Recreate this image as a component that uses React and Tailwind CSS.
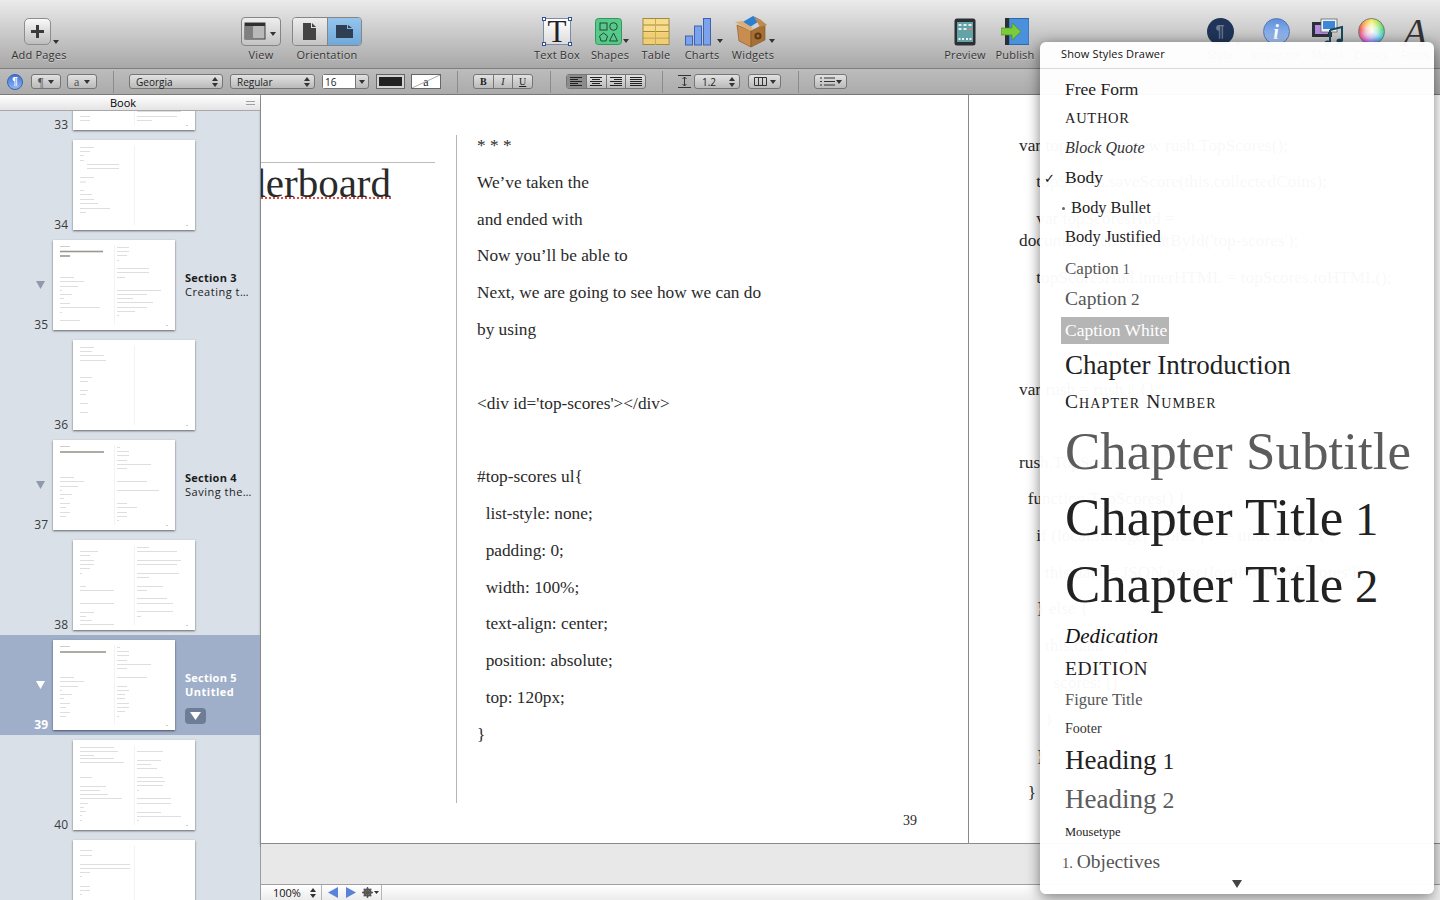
import React from 'react';

const Caret = ({ x, y }) => <path d={`M${x} ${y}h6l-3 4z`} fill="#333" />;

const AddPagesIcon = () => (
  <div className="relative h-[28px] w-[44px]">
    <div className="ml-[7px] flex h-[27px] w-[27px] items-center justify-center rounded-[5px] border border-[#8d8d8d] bg-gradient-to-b from-[#fafafa] to-[#bdbdbd]">
      <svg width="15" height="15" viewBox="0 0 15 15"><path d="M6 1h3v5h5v3H9v5H6V9H1V6h5z" fill="#3a3a3a" /></svg>
    </div>
    <svg className="absolute left-[35px] top-[21px]" width="8" height="6"><Caret x={1} y={1} /></svg>
  </div>
);

const ViewIcon = () => (
  <div className="-mt-px flex h-[29px] w-[40px] items-center justify-center rounded-[4px] border border-[#858585] bg-gradient-to-b from-[#eeeeee] to-[#c4c4c4]">
    <svg width="34" height="20" viewBox="0 0 34 20">
      <rect x="1" y="1" width="20" height="16" fill="#b9b9b9" stroke="#3c3c3c" />
      <rect x="1" y="1" width="20" height="3" fill="#2f2f2f" />
      <rect x="1" y="4" width="8" height="13" fill="#7f7f7f" />
      <Caret x={26} y={10} />
    </svg>
  </div>
);

const OrientationIcon = () => (
  <div className="-mt-px flex h-[29px] w-[70px] overflow-hidden rounded-[4px] border border-[#858585]">
    <div className="flex flex-1 items-center justify-center border-r border-[#858585] bg-gradient-to-b from-[#eeeeee] to-[#c4c4c4]">
      <svg width="13" height="17" viewBox="0 0 13 17"><path d="M0 0h8v5h5v12H0z" fill="#444" /><path d="M9 0l4 4H9z" fill="#444" /></svg>
    </div>
    <div className="flex flex-1 items-center justify-center bg-gradient-to-b from-[#95c5ec] to-[#6fa8da]">
      <svg width="17" height="13" viewBox="0 0 17 13"><path d="M0 0h11v4h6v9H0z" fill="#2f3e52" /><path d="M12 0l4 3h-4z" fill="#2f3e52" /></svg>
    </div>
  </div>
);

const TextBoxIcon = () => (
  <div className="relative h-[27px] w-[28px] border border-[#7d8aa8] bg-gradient-to-b from-white to-[#dcdcdc]">
    <div className="flex h-full items-center justify-center font-['Liberation_Serif',serif] text-[31px] leading-none text-[#222]">T</div>
    <span className="absolute -left-[2px] -top-[2px] h-[4px] w-[4px] border border-[#30508f] bg-white" />
    <span className="absolute -right-[2px] -top-[2px] h-[4px] w-[4px] border border-[#30508f] bg-white" />
    <span className="absolute -bottom-[2px] -left-[2px] h-[4px] w-[4px] border border-[#30508f] bg-white" />
    <span className="absolute -bottom-[2px] -right-[2px] h-[4px] w-[4px] border border-[#30508f] bg-white" />
  </div>
);

const ShapesIcon = () => (
  <svg width="36" height="28" viewBox="0 0 36 28">
    <rect x="1.5" y=".5" width="26" height="26" rx="3" fill="#58c98a" stroke="#2b9a5c" />
    <g fill="none" stroke="#1c4d33" strokeWidth="1">
      <rect x="6" y="5" width="7" height="7" />
      <circle cx="19.5" cy="8.5" r="3.8" />
      <path d="M9.500 15l4 3-1.500 5H7l-1.500-5z" />
      <path d="M19.500 15l4 8h-8z" />
    </g>
    <Caret x={29} y={21} />
  </svg>
);

const TableIcon = () => (
  <svg width="28" height="28" viewBox="0 0 28 28">
    <rect x="1" y=".5" width="26" height="26" fill="#f6dd8e" stroke="#a48a3a" />
    <path d="M1 7h26M1 13.500h26M1 20h26" stroke="#a48a3a" />
    <path d="M13.500 1v26" stroke="#c9ad55" />
    <rect x="2" y="14.500" width="11" height="5" fill="#f1ce73" /><rect x="14" y="14.500" width="12" height="5" fill="#f1ce73" />
    <rect x="2" y="21" width="11" height="5" fill="#f1ce73" /><rect x="14" y="21" width="12" height="5" fill="#f1ce73" />
  </svg>
);

const ChartsIcon = () => (
  <svg width="40" height="28" viewBox="0 0 40 28">
    <rect x="1.500" y="18" width="7" height="9" fill="#7ba2ea" stroke="#3a62b5" />
    <rect x="10.500" y="8" width="7" height="19" fill="#7ba2ea" stroke="#3a62b5" />
    <rect x="19.500" y=".5" width="7" height="26.500" fill="#7ba2ea" stroke="#3a62b5" />
    <Caret x={33} y={21} />
  </svg>
);

const WidgetsIcon = () => (
  <svg width="46" height="32" viewBox="0 0 46 32">
    <path d="M3 9l14 6v16L5 25z" fill="#c98d4f" stroke="#7d5426" strokeWidth=".6" />
    <path d="M17 15l14-7v16l-14 7z" fill="#a86f35" stroke="#7d5426" strokeWidth=".6" />
    <path d="M7 7l12-7 8 4-11 7z" fill="#2b7fd0" />
    <path d="M1 6l7-1 11 7-3 3z" fill="#dcae74" />
    <path d="M20 1l7 3 6 5-7 2z" fill="#c08a4e" />
    <circle cx="24" cy="20" r="3.600" fill="#5c3a17" />
    <circle cx="24" cy="20" r="1.400" fill="#a86f35" />
    <Caret x={35} y={23} />
  </svg>
);

const PreviewIcon = () => (
  <svg width="22" height="28" viewBox="0 0 22 28">
    <rect x=".5" y=".5" width="21" height="27" rx="2.500" fill="#2c2f33" />
    <rect x="3" y="4" width="16" height="20" fill="#63a3a8" />
    <path d="M4.500 6h3v2h-3zM9.500 6h3v2h-3zM14.500 6h3v2h-3zM4.500 10h3v2h-3zM9.500 10h3v2h-3z" fill="#e8eef0" />
    <path d="M4.500 20h2v2h-2zM8 20h2v2H8zM12 20h2v2h-2zM15.500 20h2v2h-2z" fill="#f2f2f2" />
    <path d="M14.500 10h3v2h-3z" fill="#e0825a" />
  </svg>
);

const PublishIcon = () => (
  <svg width="28" height="28" viewBox="0 0 28 28">
    <rect x="8" y=".5" width="20" height="26" fill="#4a90dc" stroke="#2d68ab" />
    <rect x="4" y="0" width="4" height="27" fill="#2a2d33" />
    <path d="M0 10h11V5l9 8.500-9 8.500v-5H0z" fill="#7bcb3a" stroke="#4e8f1f" strokeWidth=".7" />
  </svg>
);

const StyleIcon = () => (
  <div className="relative h-[28px] w-[36px]">
    <div className="flex h-[27px] w-[27px] items-center justify-center rounded-full bg-[#1f3458] font-['Liberation_Sans',sans-serif] text-[16px] font-bold text-[#6f7a8c]">¶</div>
    <svg className="absolute left-[27px] top-[23px]" width="8" height="6"><Caret x={1} y={1} /></svg>
  </div>
);

const InspectorIcon = () => (
  <div className="flex h-[27px] w-[27px] items-center justify-center rounded-full border border-[#5277b5] bg-gradient-to-b from-[#5e8fdc] to-[#aac8f2] font-['Liberation_Serif',serif] text-[20px] font-bold italic leading-none text-white">i</div>
);

const MediaIcon = () => (
  <svg width="34" height="28" viewBox="0 0 34 28">
    <rect x="1" y="4" width="20" height="15" fill="#2c3138" />
    <rect x="4" y="7" width="13" height="9" fill="#b48be0" />
    <rect x="10" y="1" width="16" height="13" fill="#eef1f5" stroke="#555" strokeWidth=".7" />
    <rect x="12" y="3" width="12" height="8" fill="#3c87d8" />
    <path d="M19 12l12-3v14" fill="none" stroke="#17485a" strokeWidth="2" />
    <path d="M19 12v13" stroke="#17485a" strokeWidth="2" />
    <ellipse cx="16.500" cy="25" rx="3" ry="2.500" fill="#17485a" />
    <ellipse cx="28.500" cy="23" rx="3" ry="2.500" fill="#17485a" />
  </svg>
);

const ColorsIcon = () => (
  <div className="relative h-[27px] w-[27px] rounded-full border border-[#777] bg-[conic-gradient(#f7e83c,#8ee03c,#2ecf6a,#2cc8e0,#3c6ae8,#a03ce0,#e83c9a,#e83c3c,#f79a2c,#f7e83c)]">
    <div className="h-full w-full rounded-full bg-[radial-gradient(circle,#ffffff_0%,rgba(255,255,255,0.7)_35%,rgba(255,255,255,0)_75%)]" />
  </div>
);

const FontsIcon = () => (
  <div className="font-['Liberation_Serif',serif] text-[40px] italic leading-[30px] text-[#333]">A</div>
);

const ToolItem = ({ w, ml, label, children }) => (
  <div className={`flex flex-col items-center ${w} ${ml || ''}`}>
    <div className="flex h-[28px] items-start justify-center">{children}</div>
    <div className="mt-[2px] whitespace-nowrap text-[11px] leading-[14px] tracking-[0.2px] text-[#333] [text-shadow:0_1px_0_rgba(255,255,255,0.4)]">{label}</div>
  </div>
);

const Toolbar = () => (
  <div className="flex h-[69px] shrink-0 border-b border-[#7e7e7e] bg-gradient-to-b from-[#ebebeb] to-[#a8a8a8] pt-[18px]">
    <ToolItem w="w-[78px]" label="Add Pages"><AddPagesIcon /></ToolItem>
    <ToolItem w="w-[60px]" ml="ml-[153px]" label="View"><ViewIcon /></ToolItem>
    <ToolItem w="w-[72px]" label="Orientation"><OrientationIcon /></ToolItem>
    <ToolItem w="w-[52px]" ml="ml-[168px]" label="Text Box"><TextBoxIcon /></ToolItem>
    <ToolItem w="w-[54px]" label="Shapes"><div className="pl-[4px]"><ShapesIcon /></div></ToolItem>
    <ToolItem w="w-[38px]" label="Table"><TableIcon /></ToolItem>
    <ToolItem w="w-[54px]" label="Charts"><div className="pl-[3px]"><ChartsIcon /></div></ToolItem>
    <ToolItem w="w-[48px]" label="Widgets"><div className="-mt-[2px] pl-[7px]"><WidgetsIcon /></div></ToolItem>
    <ToolItem w="w-[50px]" ml="ml-[163px]" label="Preview"><PreviewIcon /></ToolItem>
    <ToolItem w="w-[50px]" label="Publish"><PublishIcon /></ToolItem>
    <ToolItem w="w-[56px]" ml="ml-[152px]" label="Style"><div className="pl-[9px]"><StyleIcon /></div></ToolItem>
    <ToolItem w="w-[56px]" label="Inspector"><InspectorIcon /></ToolItem>
    <ToolItem w="w-[48px]" label="Media"><MediaIcon /></ToolItem>
    <ToolItem w="w-[38px]" label="Colors"><ColorsIcon /></ToolItem>
    <ToolItem w="w-[50px]" label="Fonts"><FontsIcon /></ToolItem>
  </div>
);

const ctl = 'flex h-[15px] items-center rounded-[3px] border border-[#767676] bg-gradient-to-b from-[#e2e2e2] to-[#bababa] text-[10px] leading-none text-[#222]';

const UpDown = () => (
  <svg width="6" height="10" viewBox="0 0 6 10"><path d="M0 4l3-4 3 4zM0 6l3 4 3-4z" fill="#333" /></svg>
);
const Down = () => (
  <svg width="6" height="4" viewBox="0 0 6 4"><path d="M0 0h6L3 4z" fill="#333" /></svg>
);
const Sep = ({ ml }) => <div className={`h-[22px] w-px bg-[#8c8c8c] ${ml}`} />;

const AlignIcon = ({ lines }) => (
  <svg width="12" height="9" viewBox="0 0 12 9">
    {lines.map((l, i) => <rect key={i} x={l[0]} y={i * 2} width={l[1]} height="1" fill="#222" />)}
  </svg>
);

const FormatBar = () => (
  <div className="flex h-[26px] shrink-0 items-center border-b border-[#7a7a7a] bg-gradient-to-b from-[#bcbcbc] to-[#ababab]">
    <div className="ml-[7px] flex h-[16px] w-[16px] items-center justify-center rounded-full border border-[#3862b0] bg-gradient-to-b from-[#3f74d8] to-[#8fb4ee] font-['Liberation_Sans',sans-serif] text-[10px] font-bold text-white">¶</div>
    <div className={`${ctl} ml-[8px] w-[30px] justify-between px-[6px]`}><span className="font-['Liberation_Serif',serif] text-[12px] text-[#555]">¶</span><Down /></div>
    <div className={`${ctl} ml-[6px] w-[30px] justify-between px-[6px]`}><span className="font-['Liberation_Serif',serif] text-[12px] text-[#555]">a</span><Down /></div>
    <Sep ml="ml-[16px]" />
    <div className={`${ctl} ml-[15px] w-[94px] justify-between pl-[6px] pr-[4px]`}>Georgia<UpDown /></div>
    <div className={`${ctl} ml-[7px] w-[85px] justify-between pl-[6px] pr-[4px]`}>Regular<UpDown /></div>
    <div className={`${ctl} ml-[7px] w-[47px]`}>
      <div className="flex h-full w-[33px] items-center border-r border-[#767676] bg-white pl-[2px]">16</div>
      <div className="flex flex-1 justify-center"><Down /></div>
    </div>
    <div className="ml-[7px] flex h-[15px] w-[29px] items-center justify-center border border-[#666] bg-[#d4d4d4] p-[2px]"><div className="h-full w-full bg-[#222]" /></div>
    <div className="relative ml-[6px] flex h-[15px] w-[30px] items-center justify-center border border-[#666] bg-white font-['Liberation_Serif',serif] text-[12px] leading-none text-[#222]">
      a
      <svg className="absolute inset-0" width="28" height="13" viewBox="0 0 28 13"><path d="M0 13L28 0" stroke="#aaa" /></svg>
    </div>
    <Sep ml="ml-[16px]" />
    <div className={`${ctl} ml-[15px] w-[60px] overflow-hidden font-['Liberation_Serif',serif]`}>
      <div className="flex h-full flex-1 items-center justify-center border-r border-[#767676] font-bold">B</div>
      <div className="flex h-full flex-1 items-center justify-center border-r border-[#767676] italic">I</div>
      <div className="flex h-full flex-1 items-center justify-center underline">U</div>
    </div>
    <Sep ml="ml-[17px]" />
    <div className={`${ctl} ml-[15px] w-[80px] overflow-hidden`}>
      <div className="flex h-full flex-1 items-center justify-center border-r border-[#767676] bg-[#8c8c8c]"><AlignIcon lines={[[0, 12], [0, 8], [0, 12], [0, 8], [0, 12]]} /></div>
      <div className="flex h-full flex-1 items-center justify-center border-r border-[#767676]"><AlignIcon lines={[[0, 12], [2, 8], [0, 12], [2, 8], [0, 12]]} /></div>
      <div className="flex h-full flex-1 items-center justify-center border-r border-[#767676]"><AlignIcon lines={[[0, 12], [4, 8], [0, 12], [4, 8], [0, 12]]} /></div>
      <div className="flex h-full flex-1 items-center justify-center"><AlignIcon lines={[[0, 12], [0, 12], [0, 12], [0, 12], [0, 12]]} /></div>
    </div>
    <Sep ml="ml-[16px]" />
    <svg className="ml-[15px]" width="13" height="13" viewBox="0 0 13 13"><path d="M0 .5h13M0 12.500h13" stroke="#333" /><path d="M6.500 2v9M4.500 4l2-2 2 2M4.500 9l2 2 2-2" stroke="#333" fill="none" /></svg>
    <div className={`${ctl} ml-[3px] w-[46px] justify-between pl-[7px] pr-[4px]`}>1.2<UpDown /></div>
    <div className={`${ctl} ml-[8px] w-[33px] justify-between pl-[5px] pr-[4px]`}>
      <svg width="13" height="9" viewBox="0 0 13 9"><path d="M.5.500h12v8H.500zM4.500.500v8M8.500.500v8" fill="none" stroke="#333" /></svg><Down />
    </div>
    <Sep ml="ml-[17px]" />
    <div className={`${ctl} ml-[15px] w-[33px] justify-between pl-[5px] pr-[4px]`}>
      <svg width="15" height="9" viewBox="0 0 15 9"><path d="M4 1h11M4 4.500h11M4 8h11M0 1h2M0 4.500h2M0 8h2" stroke="#333" /></svg><Down />
    </div>
  </div>
);

const thumbs = [
  { n: 33, L: [[76, 10], [80, 10]], R: [[71, 44], [76, 40], [80, 15]] },
  { n: 34, L: [[7, 14], [11, 10], [15, 4], [20, 4], [24, 32, 14], [28, 32, 14], [37, 14], [41.500, 6], [50, 4], [54, 12], [59, 14], [63, 18], [68, 30], [72, 6]], R: [] },
  { n: 35, section: 'Section 3', sub: 'Creating t…', title: [[11.500, 43], [16, 10]], L: [[37, 14], [41, 24], [46, 18], [50, 2], [54, 12], [58, 4], [63, 10], [67, 40], [72, 2], [80, 20]], R: [[7, 12], [11, 12], [15, 10], [20, 2], [28, 32], [32, 32], [37, 8], [50, 44], [54, 30], [58, 16], [62, 36], [67, 30], [71, 18], [75, 2]] },
  { n: 36, L: [[7, 14], [11, 12], [15, 24], [20, 26], [37, 12], [41, 8], [50, 8], [54, 6], [63, 8], [72, 8]], R: [] },
  { n: 37, section: 'Section 4', sub: 'Saving the…', title: [[12, 44]], L: [[37, 14], [41, 24], [46, 18], [50, 2], [54, 12], [58, 4], [63, 10], [67, 6], [72, 10], [76, 6]], R: [[7, 3], [11, 12], [15, 12], [20, 10], [24, 34], [28, 10], [41, 30], [50, 42], [63, 10], [67, 20], [72, 10], [76, 10], [80, 2]] },
  { n: 38, L: [[11, 18], [15, 10], [20, 14], [24, 14], [28, 10], [33, 2], [46, 6], [50, 34], [63, 34], [72, 14], [76, 6], [80, 12], [84, 34]], R: [[7, 12], [11, 40], [20, 44], [24, 40], [33, 42], [37, 12], [46, 26], [50, 10], [58, 30], [63, 36], [71, 36], [76, 4]] },
  { n: 39, selected: true, section: 'Section 5', sub: 'Untitled', title: [[12, 46]], L: [[37, 14], [41, 24], [46, 18], [50, 2], [54, 12], [58, 4], [63, 10], [67, 6], [72, 10], [76, 6]], R: [[7, 3], [11, 12], [15, 12], [20, 10], [24, 34], [28, 10], [37, 30], [46, 10], [50, 12], [54, 8], [58, 8], [63, 12], [67, 12], [71, 8], [76, 2]] },
  { n: 40, L: [[7, 34], [11, 38], [15, 14], [18, 34], [22, 44], [37, 12], [46, 26], [50, 20], [54, 28], [58, 42], [63, 8], [67, 4], [71, 6], [75, 2], [80, 2]], R: [[11, 26], [20, 24], [24, 14], [28, 20], [37, 26], [41, 28], [45, 26], [50, 2], [58, 34], [63, 34], [72, 24], [76, 44], [80, 2]] },
  { n: 41, L: [[10, 12], [15, 12], [24, 50], [28, 50], [32, 10], [36, 2], [46, 10], [50, 10], [54, 2]], R: [] },
];

const Thumb = ({ t }) => (
  <svg className="shrink-0 shadow-[0_1px_2px_rgba(0,0,0,0.55)]" width="122" height="90" viewBox="0 0 122 90">
    <rect width="122" height="90" fill="#fff" />
    <path d="M61.500 5v80" stroke="#f3f3f3" />
    {t.section && <rect x="7" y="6" width="10" height=".6" fill="#aaa" />}
    {(t.title || []).map(([y, w]) => <rect key={y} x="7" y={y - 0.8} width={w} height="1.600" fill="#9a9890" />)}
    {t.L.map(([y, w, x]) => <rect key={y} x={x || 7} y={y + 0.2} width={w} height=".6" fill="#c8c8c8" />)}
    {t.R.map(([y, w]) => <rect key={y} x="64" y={y + 0.2} width={w} height=".6" fill="#c8c8c8" />)}
    <rect x="113" y="85" width="2" height="1" fill="#ccc" />
  </svg>
);

const ThumbRow = ({ t }) => {
  const sectionRow = !!t.section;
  return (
    <div className={`flex h-[100px] shrink-0 items-center ${sectionRow ? '' : 'pl-[73px]'} ${t.selected ? 'bg-[#a0afc9]' : ''} relative`}>
      {sectionRow && (
        <svg className="ml-[36px] mr-[8px] shrink-0" width="9" height="8" viewBox="0 0 9 8"><path d="M0 0h9L4.500 8z" fill={t.selected ? '#fff' : '#8f9aa8'} /></svg>
      )}
      <Thumb t={t} />
      <div className={`absolute bottom-[3px] text-right text-[12px] leading-[15px] ${sectionRow ? 'right-[212px]' : 'right-[192px]'} ${t.selected ? 'font-bold text-white' : 'text-[#3b3b3b]'}`}>{t.n}</div>
      {sectionRow && (
        <div className="ml-[10px] flex h-[90px] flex-col pt-[31px]">
          <div className={`text-[11px] font-bold leading-[14px] tracking-[0.25px] ${t.selected ? 'text-white' : 'text-[#1c1c1c]'}`}>{t.section}</div>
          <div className={`text-[11px] leading-[14px] tracking-[0.5px] ${t.selected ? 'font-bold text-white' : 'text-[#1c1c1c]'}`}>{t.sub}</div>
          {t.selected && (
            <div className="mt-[9px] flex h-[16px] w-[21px] items-center justify-center rounded-[4px] bg-[#6d7d96]">
              <svg width="11" height="8" viewBox="0 0 11 8"><path d="M0 0h11L5.500 8z" fill="#fff" /></svg>
            </div>
          )}
        </div>
      )}
    </div>
  );
};

const Sidebar = () => (
  <div className="flex w-[261px] shrink-0 flex-col overflow-hidden border-r border-[#9d9d9d] bg-[#d9e0e8]">
    <div className="relative z-10 flex h-[16px] shrink-0 items-center border-b border-[#a8a8a8] bg-gradient-to-b from-white to-[#e4e4e4]">
      <div className="w-[246px] text-center text-[11px] leading-none text-black">Book</div>
      <div className="h-[4px] w-[9px] border-y border-[#a0a0a0]" />
    </div>
    <div className="-mt-[76px] flex flex-col">
      {thumbs.map(t => <ThumbRow key={t.n} t={t} />)}
    </div>
  </div>
);

const leftLines = [
  '* * *',
  'We’ve taken the',
  'and ended with',
  'Now you’ll be able to',
  'Next, we are going to see how we can do',
  'by using',
  '',
  '<div id=\'top-scores\'></div>',
  '',
  '#top-scores ul{',
  '  list-style: none;',
  '  padding: 0;',
  '  width: 100%;',
  '  text-align: center;',
  '  position: absolute;',
  '  top: 120px;',
  '}',
];

const rightLines = [
  ['var topScores = new rush.TopScores();', 36],
  ['    topScores.saveScore(this.collectedCoins);', 37],
  ['    var topScoresHud =', 22],
  ['document.getElementById(\'top-scores\');', 37],
  ['    topScoresHud.innerHTML = topScores.toHTML();', 112],
  ['var rush = rush || {};', 73],
  ['rush.TopScores = (function() {', 36],
  ['  function TopScores() {', 37],
  ['    if (localStorage[\'scores\'] !== undefined) {', 37],
  ['      this.data = JSON.parse(localStorage[\'scores\']);', 36],
  ['    } else {', 37],
  ['      this.data = {', 37],
  ['        scores: []', 37],
  ['      }', 37],
  ['    }', 36],
  ['  }', 36],
];

const serif = "font-['Liberation_Serif',serif] text-[#2a2a2a]";

const Document = () => (
  <div className="flex h-[749px] shrink-0 border-b border-[#8a8a8a] bg-white shadow-[0_2px_3px_rgba(0,0,0,0.35)]">
    <div className={`flex w-[708px] shrink-0 flex-col border-r border-[#8a8a8a] ${serif}`}>
      <div className="flex h-[708px]">
        <div className="w-[174px] shrink-0 overflow-hidden pt-[67px]">
          <div className="border-b border-[#bdbdbd]" />
          <div className="-mt-[3px] flex h-[46px] justify-end whitespace-nowrap pr-[44px] text-[41px] leading-[46px]">
            <span className="shrink-0">Showing the <span className="underline decoration-[#e0483a] decoration-dotted decoration-2 underline-offset-0">leaderboard</span></span>
          </div>
        </div>
        <div className="ml-[21px] mt-[40px] h-[668px] border-l border-[#b5b5b5] pl-[20px]">
          <div className="-mt-[7px] whitespace-pre text-[17.300px] leading-[36.800px]">
            {leftLines.map((l, i) => <div key={i} className="h-[36.800px]">{l}</div>)}
          </div>
        </div>
      </div>
      <div className="mt-[8px] pr-[51px] text-right text-[14px] leading-[20px]">39</div>
    </div>
    <div className={`flex-1 pl-[50px] pt-[33px] whitespace-pre text-[17.300px] leading-[36px] ${serif}`}>
      {rightLines.map(([l, h], i) => <div key={i} style={{ height: h }}>{l}</div>)}
    </div>
  </div>
);

const StatusBar = () => (
  <div className="flex h-[16px] shrink-0 items-center border-t border-[#a0a0a0] bg-gradient-to-b from-white to-[#ececec]">
    <div className="flex h-full w-[61px] items-center justify-between border-r border-[#b5b5b5] pl-[12px] pr-[5px] text-[11px] leading-none text-[#111]">100%<UpDown /></div>
    <div className="flex h-full w-[60px] items-center border-r border-[#b5b5b5] pl-[6px]">
      <svg width="10" height="11" viewBox="0 0 10 11"><path d="M10 0v11L0 5.500z" fill="#5a82d6" /></svg>
      <svg className="ml-[8px]" width="10" height="11" viewBox="0 0 10 11"><path d="M0 0v11l10-5.500z" fill="#5a82d6" /></svg>
      <svg className="ml-[6px]" width="17" height="11" viewBox="0 0 17 11">
        <circle cx="5.500" cy="5.500" r="3.200" fill="none" stroke="#555" strokeWidth="2" />
        <path d="M5.500 0v11M0 5.500h11M1.700 1.700l7.600 7.600M9.300 1.700L1.700 9.300" stroke="#555" strokeWidth="1.300" />
        <path d="M12 4h5l-2.500 3z" fill="#333" />
      </svg>
    </div>
  </div>
);

const styles = [
  { h: 'h-[29px]', c: 'text-[17.500px] text-[#222]', t: 'Free Form' },
  { h: 'h-[29px]', c: 'text-[14.500px] tracking-[0.7px] text-[#222]', t: 'AUTHOR' },
  { h: 'h-[30px]', c: 'text-[16px] italic text-[#333]', t: 'Block Quote' },
  { h: 'h-[30px]', c: 'text-[17.500px] text-[#222]', t: 'Body', check: true },
  { h: 'h-[30px]', c: 'text-[16.400px] text-[#222] pl-[6px]', t: 'Body Bullet', bullet: true },
  { h: 'h-[29px]', c: 'text-[16.500px] text-[#222]', t: 'Body Justified' },
  { h: 'h-[32px]', c: 'text-[17px] text-[#555]', t: 'Caption', num: '1' },
  { h: 'h-[30px]', c: 'text-[19.500px] text-[#555]', t: 'Caption', num: '2' },
  { h: 'h-[33px]', c: 'text-[17.500px] text-white', t: 'Caption White', hi: true },
  { h: 'h-[37px]', c: 'text-[27px] text-[#222]', t: 'Chapter Introduction' },
  { h: 'h-[36px]', c: 'text-[19.500px] tracking-[1.100px] text-[#222] [font-variant:small-caps]', t: 'Chapter Number' },
  { h: 'h-[62px]', c: 'text-[53px] text-[#5c5c5c]', t: 'Chapter Subtitle' },
  { h: 'h-[71px]', c: 'text-[53px] text-[#222]', t: 'Chapter Title', num: '1' },
  { h: 'h-[63px]', c: 'text-[53px] text-[#222]', t: 'Chapter Title', num: '2' },
  { h: 'h-[40px]', c: 'text-[21px] italic text-[#111]', t: 'Dedication' },
  { h: 'h-[25px]', c: 'text-[19.500px] tracking-[0.6px] text-[#222]', t: 'EDITION' },
  { h: 'h-[38px]', c: 'text-[16.500px] text-[#555]', t: 'Figure Title' },
  { h: 'h-[20px]', c: 'text-[14px] text-[#333]', t: 'Footer' },
  { h: 'h-[43px]', c: 'text-[27px] text-[#222]', t: 'Heading', num: '1' },
  { h: 'h-[34px]', c: 'text-[27px] text-[#5c5c5c]', t: 'Heading', num: '2' },
  { h: 'h-[32px]', c: 'text-[12.500px] text-[#222]', t: 'Mousetype' },
  { h: 'h-[28px]', c: 'text-[19.500px] text-[#555] -ml-[3px]', t: 'Objectives', pre: '1' },
];

const StyleRow = ({ s }) => (
  <div className={`relative flex items-center whitespace-nowrap pl-[25px] leading-none ${s.h}`}>
    {s.check && <span className="absolute left-[4px] font-['DejaVu_Sans',sans-serif] text-[13px] font-bold text-[#111]">✓</span>}
    {s.bullet && <span className="absolute left-[22px] h-[3px] w-[3px] rounded-full bg-[#666]" />}
    {s.hi && <span className="absolute left-[21px] h-[27px] w-[108px] bg-[#b5b5b5]" />}
    <span className={`relative ${s.c}`}>
      {s.pre && <span className="text-[0.75em]">{s.pre}. </span>}
      {s.t}
      {s.num && <span className="text-[0.88em]"> {s.num}</span>}
    </span>
  </div>
);

const StylesMenu = () => (
  <div className="absolute left-[1040px] top-[42px] flex h-[852px] w-[394px] flex-col rounded-[6px] bg-white/[0.97] font-['Liberation_Serif',serif] shadow-[0_3px_14px_rgba(0,0,0,0.5)]">
    <div className="flex h-[27px] shrink-0 items-center border-b border-[#d8d8d8] pb-[2px] pl-[21px] font-['Open_Sans',sans-serif] text-[11px] tracking-[0.15px] text-[#111]">Show Styles Drawer</div>
    <div className="pt-[6px]">
      {styles.map((s, i) => <StyleRow key={i} s={s} />)}
    </div>
    <div className="flex justify-center pt-[4px]">
      <svg width="10" height="8" viewBox="0 0 10 8"><path d="M0 0h10L5 8z" fill="#444" /></svg>
    </div>
  </div>
);

export default function App() {
  return (
    <div className="relative flex h-[900px] w-[1440px] flex-col overflow-hidden bg-[#e8e8e8] font-['Open_Sans',sans-serif]">
      <Toolbar />
      <FormatBar />
      <div className="flex min-h-0 flex-1">
        <Sidebar />
        <div className="flex min-w-0 flex-1 flex-col">
          <Document />
          <div className="flex-1 bg-[#e8e8e8]" />
          <StatusBar />
        </div>
      </div>
      <StylesMenu />
    </div>
  );
}
